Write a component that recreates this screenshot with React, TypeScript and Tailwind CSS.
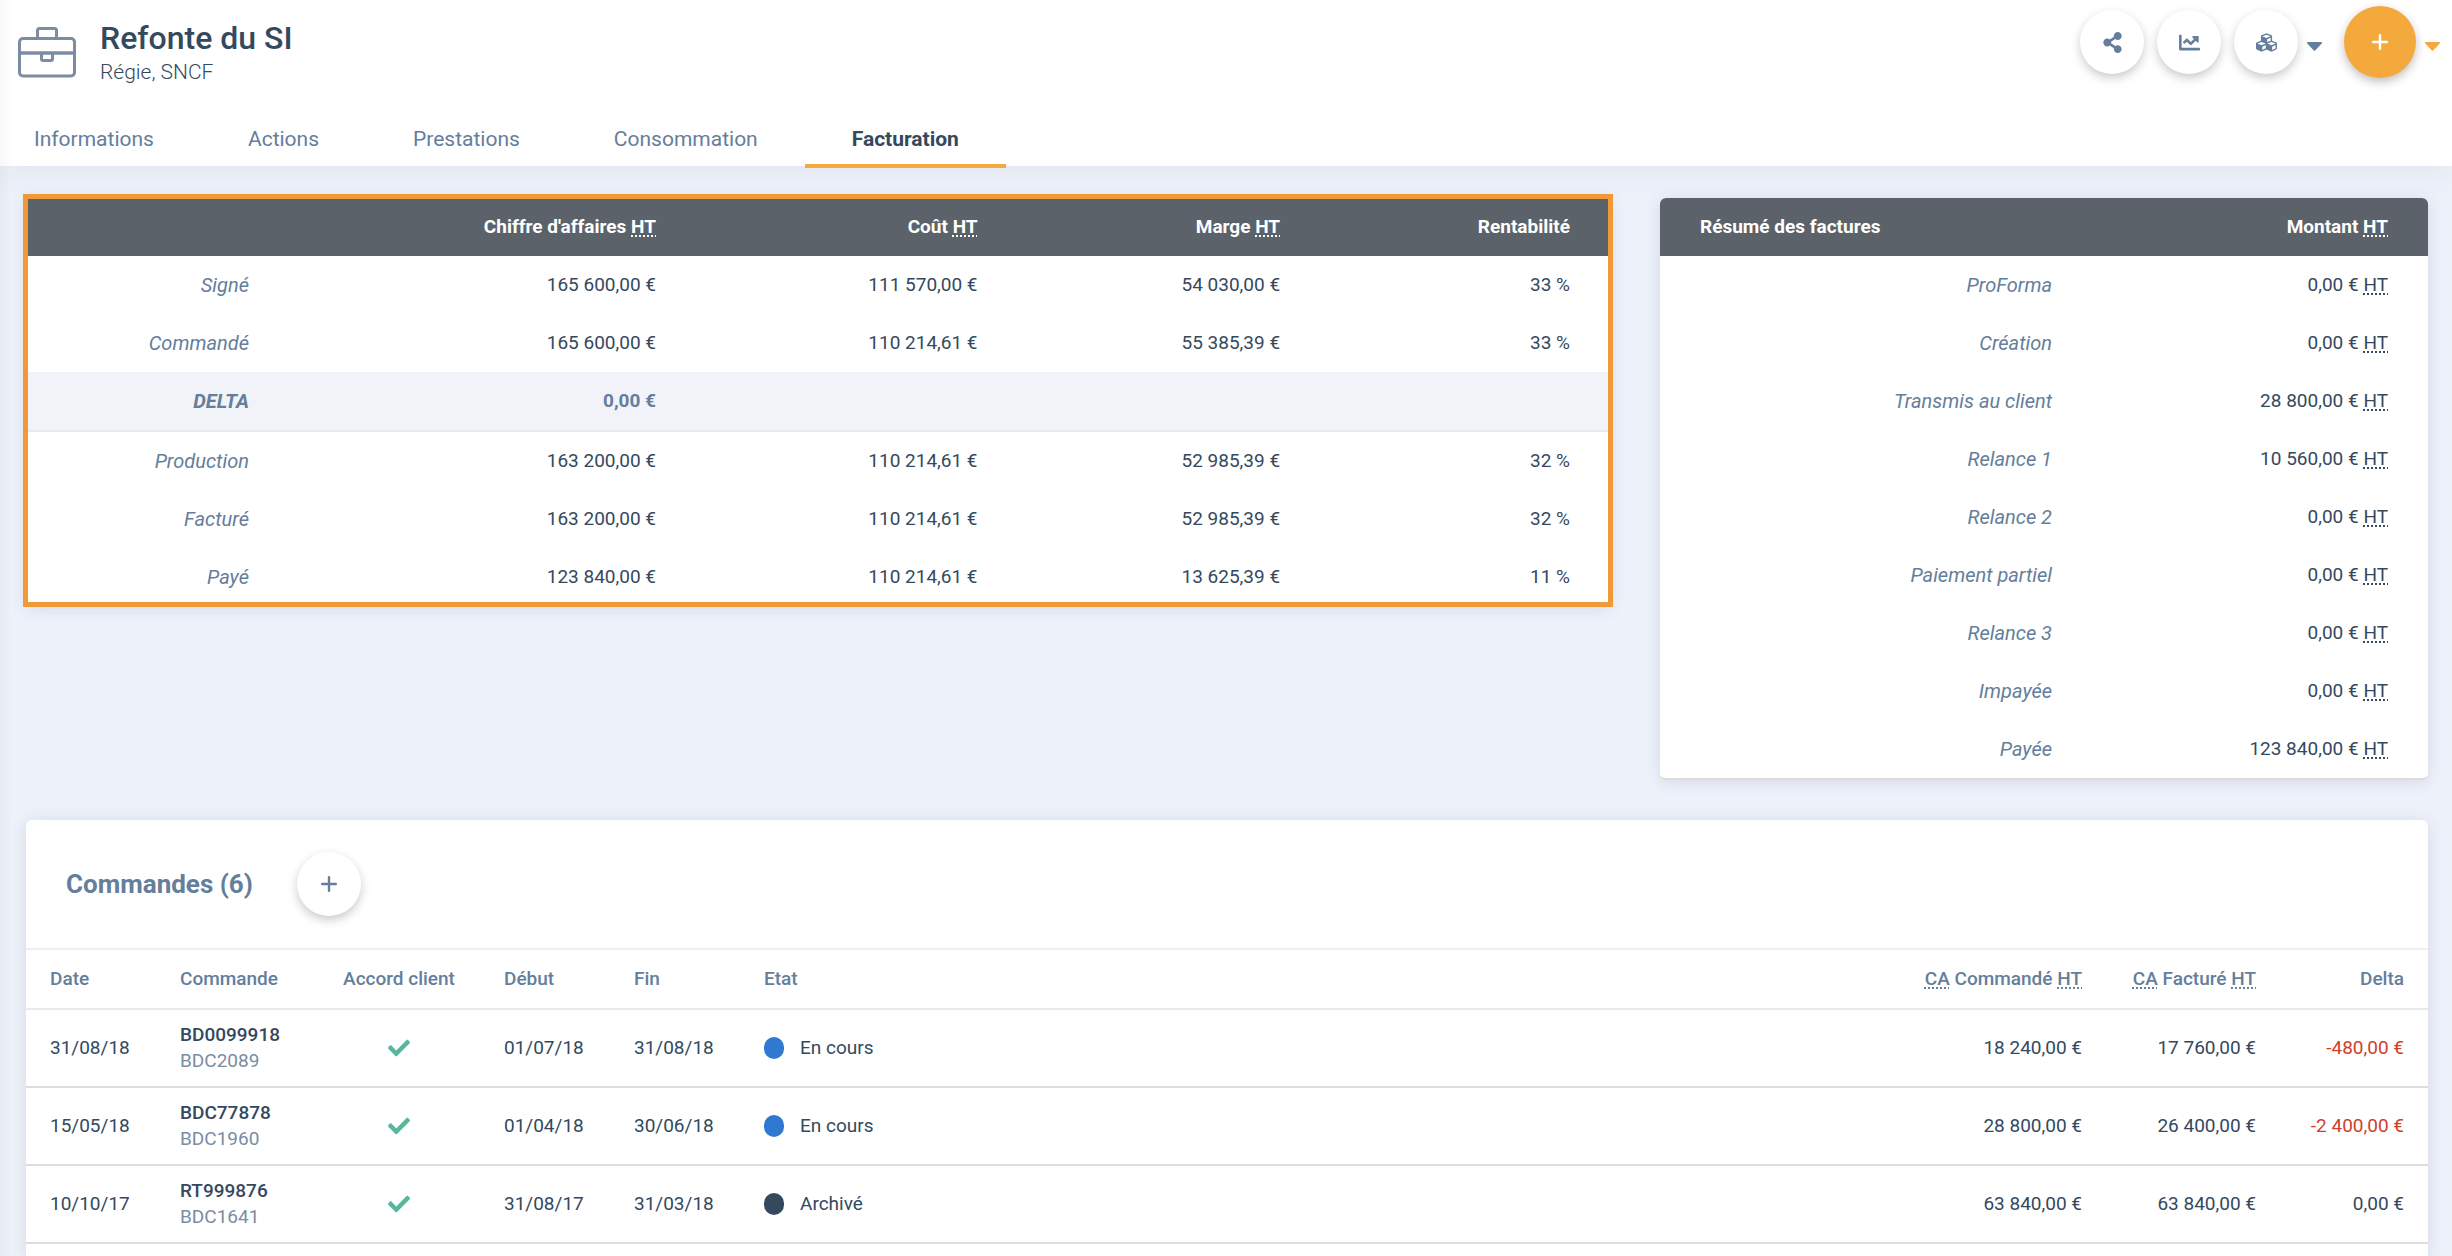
import type { ReactNode } from "react";
import { FaChartLine, FaCheck, FaCubes, FaShareAlt } from "react-icons/fa";
import clsx from "clsx";

const tabs = ["Informations", "Actions", "Prestations", "Consommation", "Facturation"];

const totals = [
  { label: "Signé", values: ["165 600,00 €", "111 570,00 €", "54 030,00 €", "33 %"] },
  { label: "Commandé", values: ["165 600,00 €", "110 214,61 €", "55 385,39 €", "33 %"] },
  { label: "DELTA", values: ["0,00 €", "", "", ""], delta: true },
  { label: "Production", values: ["163 200,00 €", "110 214,61 €", "52 985,39 €", "32 %"] },
  { label: "Facturé", values: ["163 200,00 €", "110 214,61 €", "52 985,39 €", "32 %"] },
  { label: "Payé", values: ["123 840,00 €", "110 214,61 €", "13 625,39 €", "11 %"] },
];

const invoices = [
  ["ProForma", "0,00 €"],
  ["Création", "0,00 €"],
  ["Transmis au client", "28 800,00 €"],
  ["Relance 1", "10 560,00 €"],
  ["Relance 2", "0,00 €"],
  ["Paiement partiel", "0,00 €"],
  ["Relance 3", "0,00 €"],
  ["Impayée", "0,00 €"],
  ["Payée", "123 840,00 €"],
];

const orders = [
  { date: "31/08/18", ref: "BD0099918", code: "BDC2089", start: "01/07/18", end: "31/08/18", state: "En cours", ordered: "18 240,00 €", billed: "17 760,00 €", delta: "-480,00 €" },
  { date: "15/05/18", ref: "BDC77878", code: "BDC1960", start: "01/04/18", end: "30/06/18", state: "En cours", ordered: "28 800,00 €", billed: "26 400,00 €", delta: "-2 400,00 €" },
  { date: "10/10/17", ref: "RT999876", code: "BDC1641", start: "31/08/17", end: "31/03/18", state: "Archivé", ordered: "63 840,00 €", billed: "63 840,00 €", delta: "0,00 €" },
];

function Abbr({ title, children }: { title: string; children: ReactNode }) {
  return (
    <abbr title={title} className="underline decoration-dotted decoration-2 underline-offset-2">
      {children}
    </abbr>
  );
}

function HT() {
  return <Abbr title="Hors taxes">HT</Abbr>;
}

function CA() {
  return <Abbr title="Chiffre d'affaires">CA</Abbr>;
}

function PlusIcon() {
  return (
    <svg viewBox="0 0 16 16" className="h-4 w-4" fill="none" stroke="currentColor" strokeWidth="2.4" strokeLinecap="round">
      <path d="M8 1.2v13.6M1.2 8h13.6" />
    </svg>
  );
}

function CaretIcon() {
  return (
    <svg viewBox="0 0 15 9" className="h-[9px] w-[15px]" fill="currentColor">
      <path d="M1 0h13c.9 0 1.3 1 .7 1.6L8.200 8.500a1 1 0 0 1-1.400 0L.3 1.600C-.3 1 .1 0 1 0z" />
    </svg>
  );
}

function BriefcaseIcon() {
  return (
    <svg viewBox="0 0 58 52" className="h-[52px] w-[58px]" fill="none" stroke="#7b8ca3" strokeWidth="3">
      <rect x="1.500" y="12.500" width="55" height="37.500" rx="3.500" />
      <path d="M19.500 12V4.500a2 2 0 0 1 2-2h15a2 2 0 0 1 2 2V12" />
      <path d="M2 27h54" strokeWidth="3.500" />
      <path d="M23.500 27v6a1.500 1.500 0 0 0 1.500 1.500h8a1.500 1.500 0 0 0 1.500-1.500v-6" />
    </svg>
  );
}

function RoundButton({ label, children }: { label: string; children: ReactNode }) {
  return (
    <button
      type="button"
      aria-label={label}
      className="flex h-16 w-16 items-center justify-center rounded-full bg-white text-[21px] text-[#647e9b] shadow-[0_4px_10px_rgba(60,40,40,0.25)]"
    >
      {children}
    </button>
  );
}

function Header() {
  return (
    <header className="relative bg-white shadow-[0_0_32px_rgba(40,50,80,0.08)]">
      <div className="flex h-[110px] items-start justify-between pl-[18px] pr-3">
        <div className="flex">
          <div className="pt-[26px]">
            <BriefcaseIcon />
          </div>
          <div className="pl-6 pt-5">
            <h1 className="text-[32px] font-medium leading-9 text-[#34495e]">Refonte du SI</h1>
            <p className="pt-0.5 text-[21px] leading-7 font-light text-[#34495e]">Régie, SNCF</p>
          </div>
        </div>
        <div className="flex items-center pt-1.5">
          <div className="flex gap-[13px]">
            <RoundButton label="Partager">
              <FaShareAlt />
            </RoundButton>
            <RoundButton label="Statistiques">
              <FaChartLine />
            </RoundButton>
            <RoundButton label="Modules">
              <FaCubes />
            </RoundButton>
          </div>
          <button type="button" aria-label="Autres modules" className="pl-[9px] pt-2 text-[#647e9b]">
            <CaretIcon />
          </button>
          <button
            type="button"
            aria-label="Ajouter"
            className="ml-[22px] flex h-[72px] w-[72px] items-center justify-center rounded-full bg-[#f3a93c] text-white shadow-[0_4px_10px_rgba(60,40,40,0.3)]"
          >
            <PlusIcon />
          </button>
          <button type="button" aria-label="Autres ajouts" className="pl-[9px] pt-2 text-[#f3a93c]">
            <CaretIcon />
          </button>
        </div>
      </div>
      <nav className="-mb-0.5 flex">
        {tabs.map((tab) => (
          <a
            key={tab}
            href={`#${tab.toLowerCase()}`}
            aria-current={tab === "Facturation" ? "page" : undefined}
            className={clsx(
              "h-[58px] border-b-4 px-[47px] pt-[15px] text-[21px] leading-7 first:pl-[34px]",
              tab === "Facturation" ? "border-[#f3a93c] font-bold text-[#34495e]" : "border-transparent text-[#647e9b]",
            )}
          >
            {tab}
          </a>
        ))}
      </nav>
    </header>
  );
}

function TotalsCard() {
  return (
    <section className="relative self-start bg-white shadow-[0_2px_16px_rgba(40,50,80,0.12)]">
      <table className="w-full table-fixed border-separate border-spacing-0 text-right">
        <colgroup>
          <col className="w-[16.6%]" />
          <col className="w-[25.7%]" />
          <col className="w-[20.3%]" />
          <col className="w-[19.1%]" />
          <col className="w-[18.3%]" />
        </colgroup>
        <thead className="bg-[#5b6269] text-white">
          <tr className="h-[58px]">
            <td />
            <th scope="col" className="px-10 font-bold">Chiffre d'affaires <HT /></th>
            <th scope="col" className="px-10 font-bold">Coût <HT /></th>
            <th scope="col" className="px-10 font-bold">Marge <HT /></th>
            <th scope="col" className="px-10 font-bold">Rentabilité</th>
          </tr>
        </thead>
        <tbody>
          {totals.map((row) => (
            <tr
              key={row.label}
              className={clsx(
                row.delta
                  ? "h-[60px] bg-[#f2f3f8] font-bold text-[#647e9b] [&>*]:border-b-2 [&>*]:border-[#e6e9ef]"
                  : "h-[58px]",
              )}
            >
              <th scope="row" className={clsx("px-10 text-xl italic text-[#647e9b]", row.delta ? "font-bold" : "font-normal")}>
                {row.label}
              </th>
              {row.values.map((value, i) => (
                <td key={i} className="px-10">{value}</td>
              ))}
            </tr>
          ))}
        </tbody>
      </table>
      {/* highlight frame drawn over the card edges */}
      <div className="pointer-events-none absolute -inset-x-[3px] -top-1 -bottom-px border-5 border-[#f19837]" />
    </section>
  );
}

function InvoicesCard() {
  return (
    <section className="overflow-hidden rounded-md border-b-2 border-[#dddddf] bg-white shadow-[0_2px_16px_rgba(40,50,80,0.12)]">
      <table className="w-full table-fixed text-right">
        <thead className="bg-[#5b6269] text-white">
          <tr className="h-[58px]">
            <th scope="col" className="w-[56.25%] px-10 text-left font-bold">Résumé des factures</th>
            <th scope="col" className="px-10 font-bold">Montant <HT /></th>
          </tr>
        </thead>
        <tbody>
          {invoices.map(([label, amount]) => (
            <tr key={label} className="h-[58px]">
              <th scope="row" className="px-10 text-xl font-normal italic text-[#647e9b]">{label}</th>
              <td className="px-10">{amount} <HT /></td>
            </tr>
          ))}
        </tbody>
      </table>
    </section>
  );
}

function OrdersCard() {
  return (
    <section className="mt-10 flex-1 rounded-t-md bg-white shadow-[0_2px_16px_rgba(40,50,80,0.12)]">
      <div className="flex h-[130px] items-center gap-11 border-b-2 border-[#eeeff5] pl-10">
        <h2 className="text-[26px] font-bold text-[#647e9b]">Commandes (6)</h2>
        <RoundButton label="Ajouter une commande">
          <PlusIcon />
        </RoundButton>
      </div>
      <table className="w-full table-fixed border-separate border-spacing-0 text-left">
        <thead className="text-[#647e9b]">
          <tr className="h-[60px] [&>*]:border-b-2 [&>*]:border-[#e6e9ee]">
            <th scope="col" className="w-[130px] pl-6 font-medium">Date</th>
            <th scope="col" className="w-[162px] pl-6 font-medium">Commande</th>
            <th scope="col" className="w-[162px] text-center font-medium">Accord client</th>
            <th scope="col" className="w-[130px] pl-6 font-medium">Début</th>
            <th scope="col" className="w-[130px] pl-6 font-medium">Fin</th>
            <th scope="col" className="pl-6 font-medium">Etat</th>
            <th scope="col" className="w-[220px] pr-6 text-right font-medium"><CA /> Commandé <HT /></th>
            <th scope="col" className="w-[174px] pr-6 text-right font-medium"><CA /> Facturé <HT /></th>
            <th scope="col" className="w-[148px] pr-6 text-right font-medium">Delta</th>
          </tr>
        </thead>
        <tbody>
          {orders.map((order) => (
            <tr key={order.ref} className="h-[78px] [&>*]:border-b-2 [&>*]:border-[#dcdddf]">
              <td className="pl-6">{order.date}</td>
              <td className="pl-6 leading-[26px]">
                <a href={`#${order.ref}`} className="block font-medium">{order.ref}</a>
                <span className="block text-[#7b8ca3]">{order.code}</span>
              </td>
              <td>
                <FaCheck className="mx-auto text-[22px] text-[#56b79d]" aria-label="Oui" />
              </td>
              <td className="pl-6">{order.start}</td>
              <td className="pl-6">{order.end}</td>
              <td className="pl-6">
                <span className="flex items-center gap-4">
                  <span className={clsx("h-[22px] w-5 rounded-full", order.state === "Archivé" ? "bg-[#34495e]" : "bg-[#2f7ad0]")} />
                  {order.state}
                </span>
              </td>
              <td className="pr-6 text-right">{order.ordered}</td>
              <td className="pr-6 text-right">{order.billed}</td>
              <td className={clsx("pr-6 text-right", order.delta.startsWith("-") && "text-[#cf3f2b]")}>{order.delta}</td>
            </tr>
          ))}
        </tbody>
      </table>
    </section>
  );
}

export default function App() {
  return (
    <div className="relative flex min-h-screen flex-col bg-[#edf1fa] font-[Roboto,sans-serif] text-[19px] leading-7 text-[#34495e]">
      <Header />
      <main className="flex flex-1 flex-col pl-[26px] pr-6 pt-8">
        <div className="grid grid-cols-[33fr_16fr] gap-[50px]">
          <TotalsCard />
          <InvoicesCard />
        </div>
        <OrdersCard />
      </main>
      <div className="pointer-events-none absolute inset-y-0 left-0 w-3 bg-linear-to-r from-black/3 to-transparent" />
    </div>
  );
}
